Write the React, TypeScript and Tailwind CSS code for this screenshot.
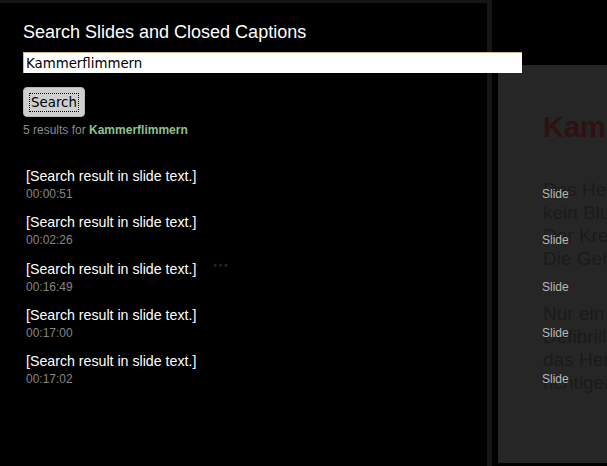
const results = [
  { text: '[Search result in slide text.]', time: '00:00:51' },
  { text: '[Search result in slide text.]', time: '00:02:26' },
  { text: '[Search result in slide text.]', time: '00:16:49' },
  { text: '[Search result in slide text.]', time: '00:17:00' },
  { text: '[Search result in slide text.]', time: '00:17:02' },
];

export default function App() {
  return (
    <div className="w-[607px] h-[466px] overflow-hidden bg-black flex font-['Liberation_Sans',Arial,sans-serif]">
      {/* Search panel */}
      <div className="relative z-10 w-[492px] shrink-0 h-full bg-black border-t-[3px] border-r-[5px] border-[#151515] pl-[23px] pt-[18px]">
        <h1 className="text-[18px] leading-[22px] text-white">Search Slides and Closed Captions</h1>
        <input
          className="block mt-[9px] w-[499px] h-[21px] bg-white border-t border-l border-[#c9b98c] px-[2px] text-[13.33px] text-black font-['DejaVu_Sans',sans-serif] outline-none"
          defaultValue="Kammerflimmern"
        />
        <button className="mt-[14px] w-[62px] h-[30px] rounded-[4px] bg-[#cfcfcf] border border-[#b5b5b5] flex items-center justify-center">
          <span className="outline-1 outline-dotted outline-black px-[1px] text-[13.33px] leading-[17px] text-black font-['DejaVu_Sans',sans-serif]">Search</span>
        </button>
        <p className="mt-[6px] text-[12px] leading-[14px] text-[#8a8a8a]">
          5 results for <span className="font-bold text-[#8ec18e]">Kammerflimmern</span>
        </p>
        <ul className="mt-[29px] pl-[3px] flex flex-col gap-[10.3px]">
          {results.map((r, i) => (
            <li key={i} className="flex items-end">
              <div className="w-[516px] shrink-0">
                <div className="text-[14.2px] leading-[20px] text-white">{r.text}</div>
                <div className="text-[12px] leading-[16px] text-[#858585]">{r.time}</div>
              </div>
              <span className="text-[12px] leading-[16px] text-[#b8b8b8]">Slide</span>
            </li>
          ))}
        </ul>
        <div className="absolute left-[196px] top-[255px] flex gap-[12px] text-[10px] font-bold text-[#103410] tracking-[2px]">
          <span>·</span>
          <span>•••</span>
        </div>
      </div>
      {/* Slide preview */}
      <div className="flex-1 pl-[6px] pt-[65px]">
        <div className="h-[398px] bg-[#262626] pl-[45px] pt-[45px] overflow-hidden whitespace-nowrap">
          <h2 className="text-[29px] leading-[34px] font-bold text-[#2f1113]">Kammerflimmern</h2>
          <div className="mt-[34px] text-[19px] leading-[23px] text-[#1b1b1b]">
            <p>Das Herz zuckt unkoordiniert,</p>
            <p>kein Blut wird gepumpt.</p>
            <p>Der Kreislauf bricht zusammen.</p>
            <p>Die Gehirnzellen sterben ab.</p>
          </div>
          <div className="mt-[32px] text-[19px] leading-[23px] text-[#1b1b1b]">
            <p>Nur ein Stromstoß mit dem</p>
            <p>Defibrillator kann</p>
            <p>das Herz wieder in den</p>
            <p>richtigen Rhythmus bringen.</p>
          </div>
        </div>
      </div>
    </div>
  );
}
